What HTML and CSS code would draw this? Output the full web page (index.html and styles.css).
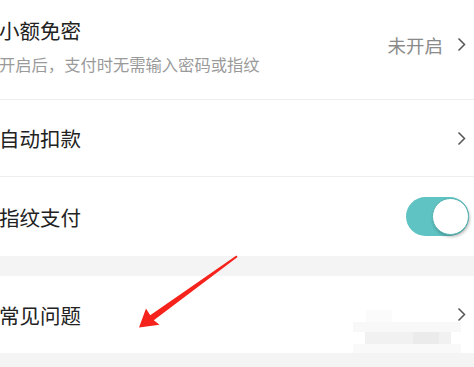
FILE: index.html
```html
<!DOCTYPE html>
<html lang="zh-CN">
<head>
<meta charset="utf-8">
<link rel="stylesheet" href="styles.css">
</head>
<body>
<div class="page">
  <div class="group">
    <div class="row row-first">
      <div class="texts">
        <div class="title">小额免密</div>
        <div class="sub">开启后，支付时无需输入密码或指纹</div>
      </div>
      <div class="right">
        <span class="value">未开启</span>
        <svg class="chev" width="9" height="15" viewBox="0 0 9 15"><polyline points="1.5,1.5 7.5,7.5 1.5,13.5" fill="none" stroke="#555" stroke-width="1.5"/></svg>
      </div>
    </div>
    <div class="row row-mid">
      <div class="title">自动扣款</div>
      <div class="right">
        <svg class="chev" width="9" height="15" viewBox="0 0 9 15"><polyline points="1.5,1.5 7.5,7.5 1.5,13.5" fill="none" stroke="#555" stroke-width="1.5"/></svg>
      </div>
    </div>
    <div class="row row-toggle">
      <div class="title">指纹支付</div>
      <div class="toggle"><div class="knob"></div></div>
    </div>
  </div>
  <div class="gap"></div>
  <div class="group">
    <div class="row row-faq">
      <div class="title">常见问题</div>
      <div class="right">
        <svg class="chev" width="9" height="15" viewBox="0 0 9 15"><polyline points="1.5,1.5 7.5,7.5 1.5,13.5" fill="none" stroke="#555" stroke-width="1.5"/></svg>
      </div>
    </div>
  </div>
  <div class="mosaic">
    <i style="left:13px;top:0;width:26px;height:12px;background:#fbfbfb"></i>
    <i style="left:0;top:12px;width:108px;height:10px;background:#f8f8f8"></i>
    <i style="left:12px;top:22px;width:86px;height:12px;background:#f1f1f1"></i>
    <i style="left:60px;top:22px;width:26px;height:12px;background:#ebebeb"></i>
    <i style="left:0;top:34px;width:108px;height:9px;background:#f9f9f9"></i>
  </div>
  <svg class="arrow" width="474" height="367" viewBox="0 0 474 367">
    <polygon points="237.6,256.9 153.8,320.2 159.5,324.8 139,327.5 146,308.5 150.2,315.2 236.4,255.4" fill="#f5231b"/>
  </svg>
</div>
</body>
</html>
```

FILE: styles.css
```css
* { box-sizing: border-box; }
html, body { margin: 0; padding: 0; background: #f4f4f4; }
body {
  font-family: "Noto Sans CJK SC", "Noto Sans", sans-serif;
  width: 474px;
  height: 367px;
  overflow: hidden;
}
.page { position: relative; width: 474px; height: 367px; }
.group { background: #fff; }
.row {
  display: flex;
  align-items: center;
  justify-content: space-between;
  padding-right: 8px;
  border-bottom: 1px solid #eeeeee;
}
.row-first { height: 100px; padding-top: 16px; padding-bottom: 26px; }
.row-mid { height: 77px; }
.row-toggle { height: 79px; border-bottom: none; }
.row-faq { height: 77px; border-bottom: none; }
.gap { height: 20px; }
.texts { display: flex; flex-direction: column; gap: 10px; }
.title {
  font-size: 20.5px;
  line-height: 28px;
  color: #222;
  margin-left: -1px;
}
.sub {
  font-size: 16.3px;
  line-height: 20px;
  color: #9a9a9a;
  margin-left: -1px;
}
.right { display: flex; align-items: center; gap: 14px; }
.value { font-size: 18.5px; color: #8a8a8a; line-height: 24px; }
.chev { display: block; }
.toggle {
  width: 63px;
  height: 39px;
  border-radius: 20px;
  background: #5ec3c2;
  position: relative;
  margin-right: -3px;
}
.knob {
  position: absolute;
  right: 0;
  top: 1px;
  width: 37px;
  height: 37px;
  border-radius: 50%;
  background: #fff;
  border: 1px solid #55b5b3;
  box-shadow: 1px 2px 3px rgba(0,0,0,0.25);
}
.mosaic {
  position: absolute;
  left: 353px;
  top: 310px;
  width: 108px;
  height: 43px;
}
.mosaic i { position: absolute; display: block; }
.arrow { position: absolute; left: 0; top: 0; }
```
